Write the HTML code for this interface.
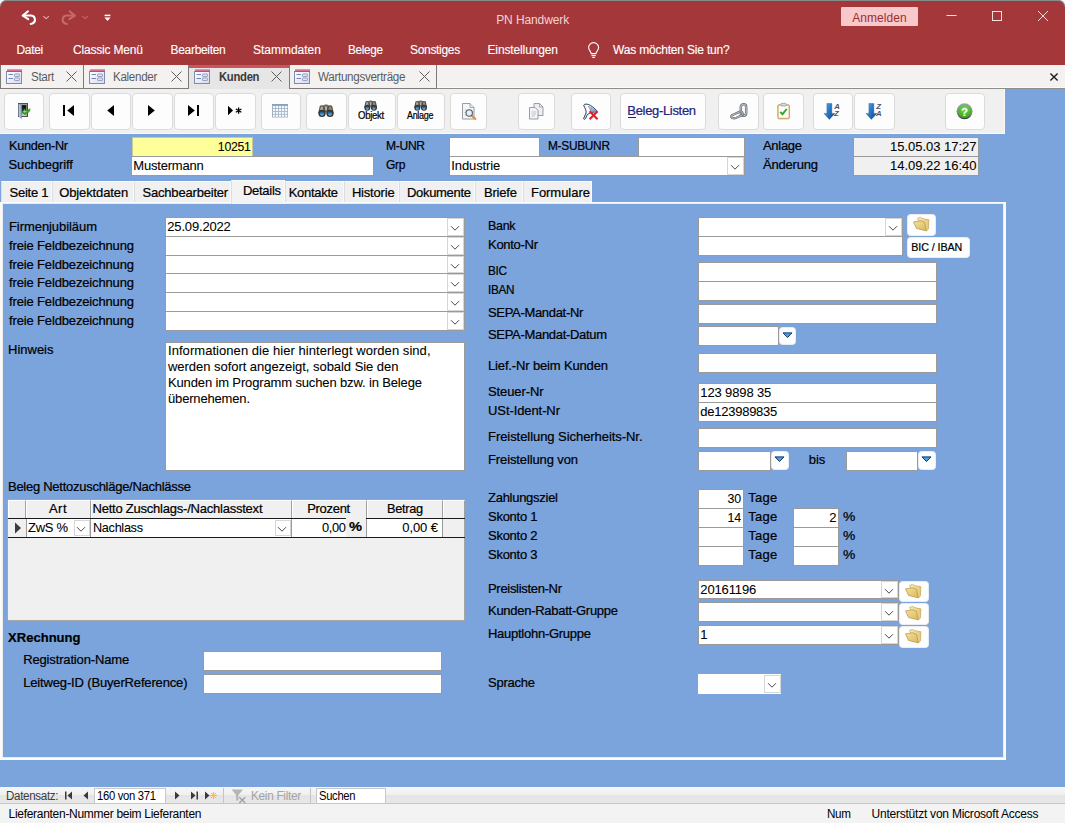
<!DOCTYPE html>
<html lang="de">
<head>
<meta charset="utf-8">
<title>PN Handwerk</title>
<style>
*{box-sizing:border-box;margin:0;padding:0}
html,body{width:1065px;height:823px;overflow:hidden;background:#7ba3dc}
body{position:relative;font-family:"Liberation Sans",sans-serif;font-size:13px;color:#000}
.a{position:absolute;white-space:nowrap;-webkit-text-stroke:0.22px}
svg{position:absolute;overflow:visible}
.b{background:#fdfdfd;border:1px solid #dddbda;border-radius:4px}
.f{background:#fff;border:1px solid #9a9a9a}
.dd{background:#fff;border:1px solid #d6d6d6}
.sb{background:#fefefe;border:1px solid #e9edf3;border-radius:3.500px}
.ft{background:#f0f0f0;border:1px solid #fafafa;border-left-color:#dedede;border-bottom:none}
.hd{background:#f0f0f0;border-right:1px solid #a0a0a0;border-bottom:1px solid #a0a0a0;border-top:1px solid #fff;border-left:1px solid #fff}
</style>
</head>
<body>
<div class="a " style="left:0px;top:0px;width:1065px;height:65px;background:#a4373a"></div>
<div class="a " style="left:0px;top:0px;width:1065px;height:1px;background:#838b8b"></div>
<svg class="a" style="left:0;top:0" width="7" height="7" viewBox="0 0 7 7"><path d="M0 0h6.500A6.500 6.500 0 0 0 0 6.500z" fill="#f4f4f4"/><path d="M6.500 .5A6 6 0 0 0 .5 6.500" fill="none" stroke="#858b8b" stroke-width="1"/></svg>
<svg class="a" style="left:1058px;top:0" width="7" height="7" viewBox="0 0 7 7"><path d="M7 0H.5A6.500 6.500 0 0 1 7 6.500z" fill="#f4f4f4"/><path d="M.5 .5A6 6 0 0 1 6.500 6.500" fill="none" stroke="#858b8b" stroke-width="1"/></svg>
<div class="a" style="top:12px;line-height:16px;font-size:12px;letter-spacing:-0.105px;left:496.20px;-webkit-text-stroke:0;color:#f3d4d5;">PN Handwerk</div>
<div class="a " style="left:841px;top:7px;width:77px;height:19px;background:#f9c8cb;border-radius:1px"></div>
<div class="a" style="top:10px;line-height:16px;font-size:12px;letter-spacing:0.066px;left:852.20px;-webkit-text-stroke:0;color:#9c2f33;">Anmelden</div>
<svg class="a" style="left:940px;top:5px" width="120" height="24" viewBox="940 5 120 24" fill="none" stroke="#f6dfe0" stroke-width="1"><path d="M946.5 15.5h10"/><rect x="992.5" y="11.5" width="9" height="9"/><path d="M1038 11l10 10M1048 11l-10 10"/></svg>
<svg class="a" style="left:18px;top:6px" width="100" height="22" viewBox="18 6 100 22" fill="none" stroke-linecap="round" stroke-linejoin="round"><path d="M28 11.300L22.700 15.600l5.500 3.500" stroke="#fff" stroke-width="2"/><path d="M23.500 15.600h7.400a4.100 4.100 0 0 1 1.500 7.900l-1.800.4" stroke="#fff" stroke-width="2"/><path d="M43.600 16.300l2.500 2.300 2.500-2.300" stroke="#eaa9ac" stroke-width="1.100"/><path d="M69.600 11.300l5.300 4.300-5.500 3.500" stroke="#c4696d" stroke-width="2"/><path d="M74.100 15.600h-7.400a4.100 4.100 0 0 0-1.500 7.900l1.800.4" stroke="#c4696d" stroke-width="2"/><path d="M82.600 16.300l2.500 2.300 2.500-2.300" stroke="#c4696d" stroke-width="1.100"/><path d="M104.600 15.400h5.800" stroke="#fff" stroke-width="1.500" stroke-linecap="butt"/><path d="M104.400 17.600h6.200l-3.100 3.500z" fill="#fff" stroke="none"/></svg>
<div class="a" style="top:42px;line-height:16px;font-size:12px;letter-spacing:-0.320px;left:16.50px;-webkit-text-stroke:0;color:#fff;-webkit-text-stroke:0.12px #fff;">Datei</div>
<div class="a" style="top:42px;line-height:16px;font-size:12px;letter-spacing:-0.184px;left:73.00px;-webkit-text-stroke:0;color:#fff;-webkit-text-stroke:0.12px #fff;">Classic Menü</div>
<div class="a" style="top:42px;line-height:16px;font-size:12px;letter-spacing:-0.305px;left:170.50px;-webkit-text-stroke:0;color:#fff;-webkit-text-stroke:0.12px #fff;">Bearbeiten</div>
<div class="a" style="top:42px;line-height:16px;font-size:12px;letter-spacing:-0.025px;left:253.00px;-webkit-text-stroke:0;color:#fff;-webkit-text-stroke:0.12px #fff;">Stammdaten</div>
<div class="a" style="top:42px;line-height:16px;font-size:12px;letter-spacing:-0.320px;transform:scaleX(0.9785);transform-origin:left center;left:348.30px;-webkit-text-stroke:0;color:#fff;-webkit-text-stroke:0.12px #fff;">Belege</div>
<div class="a" style="top:42px;line-height:16px;font-size:12px;letter-spacing:-0.320px;left:410.00px;-webkit-text-stroke:0;color:#fff;-webkit-text-stroke:0.12px #fff;">Sonstiges</div>
<div class="a" style="top:42px;line-height:16px;font-size:12px;letter-spacing:-0.129px;left:487.50px;-webkit-text-stroke:0;color:#fff;-webkit-text-stroke:0.12px #fff;">Einstellungen</div>
<div class="a" style="top:42px;line-height:16px;font-size:12px;letter-spacing:-0.188px;left:613.00px;-webkit-text-stroke:0;color:#fff;-webkit-text-stroke:0.15px #fff;">Was möchten Sie tun?</div>
<svg class="a" style="left:586px;top:41px" width="16" height="18" viewBox="586 41 16 18" fill="none" stroke="#fff" stroke-width="1.1"><path d="M591.2 53.6c0-2.2-2.6-3-2.6-6a5 5 0 0 1 10 0c0 3-2.6 3.800-2.600 6z"/><path d="M591.5 55.600h4.200M592.300 57.500h2.600"/></svg>
<div class="a " style="left:0px;top:65px;width:1065px;height:24px;background:#f3f2f1;border-bottom:1px solid #8f8e8d;box-shadow:inset 0 -1px 0 #fbfbfa"></div>
<div class="a " style="left:0px;top:65px;width:84px;height:24px;background:#f3f2f1;border-right:1px solid #7d7c7b;border-bottom:1px solid #7d7c7b;border-left:1px solid #7d7c7b"></div>
<div class="a " style="left:84px;top:65px;width:105px;height:24px;background:#f3f2f1;border-right:1px solid #7d7c7b;border-bottom:1px solid #7d7c7b"></div>
<div class="a " style="left:189px;top:65px;width:100px;height:24px;background:#e7e6e6;border-top:3px solid #c9565a"></div>
<div class="a " style="left:289px;top:65px;width:148px;height:24px;background:#f3f2f1;border-right:1px solid #7d7c7b;border-bottom:1px solid #7d7c7b;border-left:1px solid #7d7c7b"></div>
<svg width="16" height="15" viewBox="0 0 16 15" style="left:6px;top:69px"><defs><linearGradient id="tig" x1="0" y1="0" x2="1" y2="1"><stop offset="0" stop-color="#ffffff"/><stop offset="1" stop-color="#d5dbf0"/></linearGradient><linearGradient id="tit" x1="0" y1="0" x2="0" y2="1"><stop offset="0" stop-color="#e9a9bf"/><stop offset="1" stop-color="#bf3a62"/></linearGradient></defs><rect x="0.500" y="2.500" width="15" height="12" fill="url(#tig)" stroke="#7d8bae"/><rect x="1" y="0" width="15" height="3" fill="url(#tit)"/><path d="M2.500 5.500h4.500M2.500 9.500h4.500" stroke="#7587b3" stroke-width="1"/><rect x="8.500" y="5" width="5" height="2.500" rx=".6" fill="#dfe4f1" stroke="#8d99bb" stroke-width=".9"/><rect x="8.500" y="9" width="5" height="2.500" rx=".6" fill="#dfe4f1" stroke="#8d99bb" stroke-width=".9"/></svg>
<svg width="16" height="15" viewBox="0 0 16 15" style="left:89px;top:69px"><defs><linearGradient id="tig" x1="0" y1="0" x2="1" y2="1"><stop offset="0" stop-color="#ffffff"/><stop offset="1" stop-color="#d5dbf0"/></linearGradient><linearGradient id="tit" x1="0" y1="0" x2="0" y2="1"><stop offset="0" stop-color="#e9a9bf"/><stop offset="1" stop-color="#bf3a62"/></linearGradient></defs><rect x="0.500" y="2.500" width="15" height="12" fill="url(#tig)" stroke="#7d8bae"/><rect x="1" y="0" width="15" height="3" fill="url(#tit)"/><path d="M2.500 5.500h4.500M2.500 9.500h4.500" stroke="#7587b3" stroke-width="1"/><rect x="8.500" y="5" width="5" height="2.500" rx=".6" fill="#dfe4f1" stroke="#8d99bb" stroke-width=".9"/><rect x="8.500" y="9" width="5" height="2.500" rx=".6" fill="#dfe4f1" stroke="#8d99bb" stroke-width=".9"/></svg>
<svg width="16" height="15" viewBox="0 0 16 15" style="left:194px;top:69px"><defs><linearGradient id="tig" x1="0" y1="0" x2="1" y2="1"><stop offset="0" stop-color="#ffffff"/><stop offset="1" stop-color="#d5dbf0"/></linearGradient><linearGradient id="tit" x1="0" y1="0" x2="0" y2="1"><stop offset="0" stop-color="#e9a9bf"/><stop offset="1" stop-color="#bf3a62"/></linearGradient></defs><rect x="0.500" y="2.500" width="15" height="12" fill="url(#tig)" stroke="#7d8bae"/><rect x="1" y="0" width="15" height="3" fill="url(#tit)"/><path d="M2.500 5.500h4.500M2.500 9.500h4.500" stroke="#7587b3" stroke-width="1"/><rect x="8.500" y="5" width="5" height="2.500" rx=".6" fill="#dfe4f1" stroke="#8d99bb" stroke-width=".9"/><rect x="8.500" y="9" width="5" height="2.500" rx=".6" fill="#dfe4f1" stroke="#8d99bb" stroke-width=".9"/></svg>
<svg width="16" height="15" viewBox="0 0 16 15" style="left:294px;top:69px"><defs><linearGradient id="tig" x1="0" y1="0" x2="1" y2="1"><stop offset="0" stop-color="#ffffff"/><stop offset="1" stop-color="#d5dbf0"/></linearGradient><linearGradient id="tit" x1="0" y1="0" x2="0" y2="1"><stop offset="0" stop-color="#e9a9bf"/><stop offset="1" stop-color="#bf3a62"/></linearGradient></defs><rect x="0.500" y="2.500" width="15" height="12" fill="url(#tig)" stroke="#7d8bae"/><rect x="1" y="0" width="15" height="3" fill="url(#tit)"/><path d="M2.500 5.500h4.500M2.500 9.500h4.500" stroke="#7587b3" stroke-width="1"/><rect x="8.500" y="5" width="5" height="2.500" rx=".6" fill="#dfe4f1" stroke="#8d99bb" stroke-width=".9"/><rect x="8.500" y="9" width="5" height="2.500" rx=".6" fill="#dfe4f1" stroke="#8d99bb" stroke-width=".9"/></svg>
<div class="a" style="top:69px;line-height:16px;font-size:12px;letter-spacing:-0.320px;transform:scaleX(0.9683);transform-origin:left center;left:30.60px;-webkit-text-stroke:0;color:#5c5b5a;">Start</div>
<div class="a" style="top:69px;line-height:16px;font-size:12px;letter-spacing:-0.320px;transform:scaleX(0.9673);transform-origin:left center;left:113.40px;-webkit-text-stroke:0;color:#5c5b5a;">Kalender</div>
<div class="a" style="top:69px;line-height:16px;font-size:12px;letter-spacing:-0.320px;transform:scaleX(0.9405);transform-origin:left center;left:218.50px;font-weight:bold;-webkit-text-stroke:0;color:#3b3a39;">Kunden</div>
<div class="a" style="top:69px;line-height:16px;font-size:12px;letter-spacing:-0.320px;transform:scaleX(0.9708);transform-origin:left center;left:318.30px;-webkit-text-stroke:0;color:#5c5b5a;">Wartungsverträge</div>
<svg width="11" height="11" viewBox="0 0 11 11" style="left:66px;top:71px" fill="none" stroke="#5e5d5c" stroke-width="1"><path d="M0.500 0.500l10 10M10.500 0.500l-10 10"/></svg>
<svg width="11" height="11" viewBox="0 0 11 11" style="left:171px;top:71px" fill="none" stroke="#5e5d5c" stroke-width="1"><path d="M0.500 0.500l10 10M10.500 0.500l-10 10"/></svg>
<svg width="11" height="11" viewBox="0 0 11 11" style="left:271px;top:71px" fill="none" stroke="#5e5d5c" stroke-width="1"><path d="M0.500 0.500l10 10M10.500 0.500l-10 10"/></svg>
<svg width="11" height="11" viewBox="0 0 11 11" style="left:419px;top:71px" fill="none" stroke="#5e5d5c" stroke-width="1"><path d="M0.500 0.500l10 10M10.500 0.500l-10 10"/></svg>
<svg class="a" style="left:1049px;top:72px" width="10" height="10" viewBox="0 0 10 10" fill="none" stroke="#1e1e1e" stroke-width="1.400"><path d="M1.400 1.400l7.200 7.200M8.600 1.400l-7.200 7.200"/></svg>
<div class="a " style="left:0px;top:89px;width:1005px;height:45px;background:#f0f0f0;border-right:1px solid #fafafa;border-bottom:1px solid #fafafa"></div>
<div class="a b" style="left:4.0px;top:93px;width:40.0px;height:37px;"></div>
<div class="a b" style="left:49.0px;top:93px;width:40.5px;height:37px;"></div>
<div class="a b" style="left:91.0px;top:93px;width:39.5px;height:37px;"></div>
<div class="a b" style="left:132.0px;top:93px;width:40.5px;height:37px;"></div>
<div class="a b" style="left:174.0px;top:93px;width:39.5px;height:37px;"></div>
<div class="a b" style="left:215.0px;top:93px;width:40.5px;height:37px;"></div>
<div class="a b" style="left:261.0px;top:93px;width:40.0px;height:37px;"></div>
<div class="a b" style="left:306.0px;top:93px;width:41.0px;height:37px;"></div>
<div class="a b" style="left:347.5px;top:93px;width:48.5px;height:37px;"></div>
<div class="a b" style="left:396.5px;top:93px;width:48.5px;height:37px;"></div>
<div class="a b" style="left:450.0px;top:93px;width:37.0px;height:37px;"></div>
<div class="a b" style="left:518.0px;top:93px;width:37.0px;height:37px;"></div>
<div class="a b" style="left:571.0px;top:93px;width:40.0px;height:37px;"></div>
<div class="a b" style="left:620.0px;top:93px;width:86.0px;height:37px;"></div>
<div class="a b" style="left:718.0px;top:93px;width:41.0px;height:37px;"></div>
<div class="a b" style="left:763.0px;top:93px;width:41.0px;height:37px;"></div>
<div class="a b" style="left:813.0px;top:93px;width:40.0px;height:37px;"></div>
<div class="a b" style="left:854.0px;top:93px;width:41.0px;height:37px;"></div>
<div class="a b" style="left:945.0px;top:93px;width:40.0px;height:37px;"></div>
<div class="a" style="top:138px;line-height:16px;font-size:13px;letter-spacing:-0.320px;transform:scaleX(0.9783);transform-origin:left center;left:8.50px;">Kunden-Nr</div>
<div class="a" style="top:157px;line-height:16px;font-size:13px;letter-spacing:-0.106px;left:8.50px;">Suchbegriff</div>
<div class="a f" style="left:132px;top:137px;width:121px;height:20px;background:#ffff99;border-color:#c9c9a0;"></div>
<div class="a" style="top:139px;line-height:16px;font-size:13px;letter-spacing:-0.320px;transform:scaleX(0.9463);transform-origin:right center;right:814.82px;-webkit-text-stroke:0.080px;">10251</div>
<div class="a f" style="left:131px;top:156px;width:243px;height:20px;background:#fff;"></div>
<div class="a" style="top:158px;line-height:16px;font-size:13px;letter-spacing:-0.195px;left:133.30px;-webkit-text-stroke:0.080px;">Mustermann</div>
<div class="a" style="top:138px;line-height:16px;font-size:13px;letter-spacing:-0.320px;transform:scaleX(0.9275);transform-origin:left center;left:386.00px;">M-UNR</div>
<div class="a" style="top:157px;line-height:16px;font-size:13px;letter-spacing:-0.320px;transform:scaleX(0.9272);transform-origin:left center;left:386.00px;">Grp</div>
<div class="a f" style="left:449px;top:137px;width:91px;height:20px;background:#fff;"></div>
<div class="a" style="top:138px;line-height:16px;font-size:13px;letter-spacing:-0.320px;transform:scaleX(0.9142);transform-origin:left center;left:548.00px;">M-SUBUNR</div>
<div class="a f" style="left:638px;top:137px;width:107px;height:20px;background:#fff;"></div>
<div class="a f" style="left:449px;top:156px;width:296px;height:20px;background:#fff;"></div>
<div class="a" style="top:158px;line-height:16px;font-size:13px;letter-spacing:-0.107px;left:451.30px;-webkit-text-stroke:0.080px;">Industrie</div>
<div class="a dd" style="left:727px;top:157px;width:17px;height:18px;"></div>
<svg class="a" style="left:730.0px;top:164.0px" width="10" height="7" viewBox="0 0 10 7" fill="none" stroke="#4a4a4a" stroke-width="1"><path d="M1 1.200l4 4 4-4"/></svg>
<div class="a" style="top:138px;line-height:16px;font-size:13px;letter-spacing:-0.296px;left:763.00px;">Anlage</div>
<div class="a" style="top:157px;line-height:16px;font-size:13px;letter-spacing:-0.197px;left:763.00px;">Änderung</div>
<div class="a f" style="left:853px;top:137px;width:126px;height:20px;background:#f0f0f0;"></div>
<div class="a" style="top:139px;line-height:16px;font-size:13px;letter-spacing:-0.019px;right:88.52px;-webkit-text-stroke:0.080px;">15.05.03 17:27</div>
<div class="a f" style="left:853px;top:156px;width:126px;height:20px;background:#f0f0f0;"></div>
<div class="a" style="top:158px;line-height:16px;font-size:13px;letter-spacing:-0.019px;right:88.52px;-webkit-text-stroke:0.080px;">14.09.22 16:40</div>
<div class="a " style="left:0px;top:202px;width:1006px;height:558px;background:#fbfbfa"></div>
<div class="a " style="left:3px;top:204px;width:1000px;height:553px;background:#7ba3dc;box-shadow:0 0 0 1px #ececec"></div>
<div class="a ft" style="left:1px;top:181px;width:51px;height:21px;"></div>
<div class="a ft" style="left:52px;top:181px;width:82px;height:21px;"></div>
<div class="a ft" style="left:134px;top:181px;width:97px;height:21px;"></div>
<div class="a ft" style="left:285px;top:181px;width:59px;height:21px;"></div>
<div class="a ft" style="left:344px;top:181px;width:55px;height:21px;"></div>
<div class="a ft" style="left:399px;top:181px;width:76px;height:21px;"></div>
<div class="a ft" style="left:475px;top:181px;width:48px;height:21px;"></div>
<div class="a ft" style="left:523px;top:181px;width:69px;height:21px;"></div>
<div class="a ft" style="left:231px;top:180px;width:54px;height:24px;background:#f3f3f3"></div>
<div class="a" style="top:185px;line-height:16px;font-size:13px;letter-spacing:-0.262px;left:9.60px;">Seite 1</div>
<div class="a" style="top:185px;line-height:16px;font-size:13px;letter-spacing:-0.111px;left:59.20px;">Objektdaten</div>
<div class="a" style="top:185px;line-height:16px;font-size:13px;letter-spacing:-0.190px;left:142.50px;">Sachbearbeiter</div>
<div class="a" style="top:185px;line-height:16px;font-size:13px;letter-spacing:-0.287px;left:288.70px;">Kontakte</div>
<div class="a" style="top:185px;line-height:16px;font-size:13px;letter-spacing:-0.181px;left:351.90px;">Historie</div>
<div class="a" style="top:185px;line-height:16px;font-size:13px;letter-spacing:-0.320px;left:407.00px;">Dokumente</div>
<div class="a" style="top:185px;line-height:16px;font-size:13px;letter-spacing:-0.171px;left:483.90px;">Briefe</div>
<div class="a" style="top:185px;line-height:16px;font-size:13px;letter-spacing:-0.043px;left:531.00px;">Formulare</div>
<div class="a" style="top:183px;line-height:16px;font-size:13px;letter-spacing:-0.290px;left:243.00px;">Details</div>
<div class="a f" style="left:165px;top:217px;width:300px;height:20px;background:#fff;"></div>
<div class="a" style="top:219px;line-height:16px;font-size:13px;letter-spacing:-0.174px;left:167.30px;-webkit-text-stroke:0.080px;">25.09.2022</div>
<div class="a dd" style="left:447px;top:218px;width:17px;height:18px;"></div>
<svg class="a" style="left:450.0px;top:225.0px" width="10" height="7" viewBox="0 0 10 7" fill="none" stroke="#4a4a4a" stroke-width="1"><path d="M1 1.200l4 4 4-4"/></svg>
<div class="a" style="top:219px;line-height:16px;font-size:13px;letter-spacing:-0.067px;left:9.00px;">Firmenjubiläum</div>
<div class="a f" style="left:165px;top:236px;width:300px;height:20px;background:#fff;"></div>
<div class="a dd" style="left:447px;top:237px;width:17px;height:18px;"></div>
<svg class="a" style="left:450.0px;top:244.0px" width="10" height="7" viewBox="0 0 10 7" fill="none" stroke="#4a4a4a" stroke-width="1"><path d="M1 1.200l4 4 4-4"/></svg>
<div class="a" style="top:238px;line-height:16px;font-size:13px;letter-spacing:-0.146px;left:9.00px;">freie Feldbezeichnung</div>
<div class="a f" style="left:165px;top:255px;width:300px;height:19px;background:#fff;"></div>
<div class="a dd" style="left:447px;top:256px;width:17px;height:17px;"></div>
<svg class="a" style="left:450.0px;top:262.5px" width="10" height="7" viewBox="0 0 10 7" fill="none" stroke="#4a4a4a" stroke-width="1"><path d="M1 1.200l4 4 4-4"/></svg>
<div class="a" style="top:257px;line-height:16px;font-size:13px;letter-spacing:-0.146px;left:9.00px;">freie Feldbezeichnung</div>
<div class="a f" style="left:165px;top:273px;width:300px;height:20px;background:#fff;"></div>
<div class="a dd" style="left:447px;top:274px;width:17px;height:18px;"></div>
<svg class="a" style="left:450.0px;top:281.0px" width="10" height="7" viewBox="0 0 10 7" fill="none" stroke="#4a4a4a" stroke-width="1"><path d="M1 1.200l4 4 4-4"/></svg>
<div class="a" style="top:275px;line-height:16px;font-size:13px;letter-spacing:-0.146px;left:9.00px;">freie Feldbezeichnung</div>
<div class="a f" style="left:165px;top:292px;width:300px;height:20px;background:#fff;"></div>
<div class="a dd" style="left:447px;top:293px;width:17px;height:18px;"></div>
<svg class="a" style="left:450.0px;top:300.0px" width="10" height="7" viewBox="0 0 10 7" fill="none" stroke="#4a4a4a" stroke-width="1"><path d="M1 1.200l4 4 4-4"/></svg>
<div class="a" style="top:294px;line-height:16px;font-size:13px;letter-spacing:-0.146px;left:9.00px;">freie Feldbezeichnung</div>
<div class="a f" style="left:165px;top:311px;width:300px;height:20px;background:#fff;"></div>
<div class="a dd" style="left:447px;top:312px;width:17px;height:18px;"></div>
<svg class="a" style="left:450.0px;top:319.0px" width="10" height="7" viewBox="0 0 10 7" fill="none" stroke="#4a4a4a" stroke-width="1"><path d="M1 1.200l4 4 4-4"/></svg>
<div class="a" style="top:313px;line-height:16px;font-size:13px;letter-spacing:-0.146px;left:9.00px;">freie Feldbezeichnung</div>
<div class="a" style="top:342px;line-height:16px;font-size:13px;letter-spacing:-0.002px;left:8.00px;">Hinweis</div>
<div class="a f" style="left:165px;top:342px;width:300px;height:129px;"></div>
<div class="a" style="top:343px;line-height:16px;font-size:13px;letter-spacing:0.052px;left:168.00px;-webkit-text-stroke:0.080px;">Informationen die hier hinterlegt worden sind,</div>
<div class="a" style="top:359px;line-height:16px;font-size:13px;letter-spacing:-0.040px;left:168.03px;-webkit-text-stroke:0.080px;">werden sofort angezeigt, sobald Sie den</div>
<div class="a" style="top:375px;line-height:16px;font-size:13px;letter-spacing:-0.139px;left:168.00px;-webkit-text-stroke:0.080px;">Kunden im Programm suchen bzw. in Belege</div>
<div class="a" style="top:391px;line-height:16px;font-size:13px;letter-spacing:-0.167px;left:168.00px;-webkit-text-stroke:0.080px;">übernehemen.</div>
<div class="a" style="top:479px;line-height:16px;font-size:13px;letter-spacing:-0.268px;left:8.00px;">Beleg Nettozuschläge/Nachlässe</div>
<div class="a " style="left:7px;top:499px;width:458px;height:122px;background:#f0f0f0;border:1px solid #a6a6a6"></div>
<div class="a hd" style="left:8px;top:499.5px;width:18px;height:19.0px;"></div>
<div class="a hd" style="left:26px;top:499.5px;width:64.5px;height:19.0px;"></div>
<div class="a hd" style="left:90.5px;top:499.5px;width:201.0px;height:19.0px;"></div>
<div class="a hd" style="left:291.5px;top:499.5px;width:75.0px;height:19.0px;"></div>
<div class="a hd" style="left:366.5px;top:499.5px;width:76.0px;height:19.0px;"></div>
<div class="a hd" style="left:442.5px;top:499.5px;width:22.0px;height:19.0px;"></div>
<div class="a" style="top:501px;line-height:16px;font-size:13px;letter-spacing:0.443px;left:49.00px;">Art</div>
<div class="a" style="top:501px;line-height:16px;font-size:13px;letter-spacing:-0.225px;left:92.50px;">Netto Zuschlags-/Nachlasstext</div>
<div class="a" style="top:501px;line-height:16px;font-size:13px;letter-spacing:-0.300px;left:307.20px;">Prozent</div>
<div class="a" style="top:501px;line-height:16px;font-size:13px;letter-spacing:-0.320px;transform:scaleX(0.9810);transform-origin:left center;left:386.50px;">Betrag</div>
<div class="a " style="left:26px;top:519px;width:416.5px;height:18px;background:#fff"></div>
<div class="a " style="left:8px;top:518.2px;width:456.5px;height:1.0px;background:#1a1a1a"></div>
<div class="a " style="left:8px;top:536.8px;width:456.5px;height:1.0px;background:#1a1a1a"></div>
<div class="a " style="left:25.5px;top:519px;width:1.0px;height:18px;background:#9a9a9a"></div>
<div class="a " style="left:90.0px;top:519px;width:1.0px;height:18px;background:#9a9a9a"></div>
<div class="a " style="left:291.0px;top:519px;width:1.0px;height:18px;background:#9a9a9a"></div>
<div class="a " style="left:366.0px;top:519px;width:1.0px;height:18px;background:#9a9a9a"></div>
<div class="a " style="left:442.0px;top:519px;width:1.0px;height:18px;background:#9a9a9a"></div>
<div class="a " style="left:346px;top:518px;width:20px;height:18.799999999999955px;background:#f0f0f0"></div>
<svg class="a" style="left:14px;top:522px" width="8" height="12" viewBox="0 0 8 12"><path d="M1 0.500l6 5.500-6 5.500z" fill="#3c3c3c"/></svg>
<div class="a" style="top:520px;line-height:16px;font-size:13px;letter-spacing:-0.293px;left:28.00px;-webkit-text-stroke:0.080px;">ZwS %</div>
<div class="a dd" style="left:73.5px;top:520px;width:16.0px;height:16px;"></div>
<svg class="a" style="left:76.0px;top:526.0px" width="10" height="7" viewBox="0 0 10 7" fill="none" stroke="#4a4a4a" stroke-width="1"><path d="M1 1.200l4 4 4-4"/></svg>
<div class="a" style="top:520px;line-height:16px;font-size:13px;letter-spacing:-0.320px;transform:scaleX(0.9760);transform-origin:left center;left:92.50px;-webkit-text-stroke:0.080px;">Nachlass</div>
<div class="a dd" style="left:274.5px;top:520px;width:16.0px;height:16px;"></div>
<svg class="a" style="left:277.0px;top:526.0px" width="10" height="7" viewBox="0 0 10 7" fill="none" stroke="#4a4a4a" stroke-width="1"><path d="M1 1.200l4 4 4-4"/></svg>
<div class="a" style="top:520px;line-height:16px;font-size:13px;letter-spacing:-0.320px;transform:scaleX(0.9861);transform-origin:left center;left:321.60px;-webkit-text-stroke:0.080px;">0,00</div>
<div class="a" style="top:519px;line-height:16px;font-size:13px;transform:scaleX(1.1249);transform-origin:left center;left:348.60px;font-weight:bold;">%</div>
<div class="a" style="top:520px;line-height:16px;font-size:13px;letter-spacing:-0.108px;left:402.30px;-webkit-text-stroke:0.080px;">0,00 €</div>
<div class="a" style="top:630px;line-height:16px;font-size:13px;letter-spacing:0.034px;left:8.00px;font-weight:bold;">XRechnung</div>
<div class="a" style="top:652px;line-height:16px;font-size:13px;letter-spacing:-0.148px;left:23.20px;">Registration-Name</div>
<div class="a" style="top:675px;line-height:16px;font-size:13px;letter-spacing:-0.156px;left:23.20px;">Leitweg-ID (BuyerReference)</div>
<div class="a f" style="left:203px;top:651px;width:239px;height:20px;background:#fff;"></div>
<div class="a f" style="left:203px;top:674px;width:239px;height:20px;background:#fff;"></div>
<svg width="0" height="0" style="position:absolute"><defs><linearGradient id="fg" x1="0" y1="0" x2="1" y2="1"><stop offset="0" stop-color="#f4e19c"/><stop offset="1" stop-color="#d9b85e"/></linearGradient><linearGradient id="fb" x1="0" y1="0" x2="1" y2="0"><stop offset="0" stop-color="#f8edc0"/><stop offset="1" stop-color="#e3c774"/></linearGradient></defs></svg>
<div class="a" style="top:218px;line-height:16px;font-size:13px;letter-spacing:-0.320px;transform:scaleX(0.9584);transform-origin:left center;left:488.00px;">Bank</div>
<div class="a" style="top:237px;line-height:16px;font-size:13px;letter-spacing:-0.289px;left:488.00px;">Konto-Nr</div>
<div class="a" style="top:263px;line-height:16px;font-size:13px;letter-spacing:-0.320px;transform:scaleX(0.9034);transform-origin:left center;left:488.00px;">BIC</div>
<div class="a" style="top:282px;line-height:16px;font-size:13px;letter-spacing:-0.320px;transform:scaleX(0.9019);transform-origin:left center;left:488.00px;">IBAN</div>
<div class="a" style="top:305px;line-height:16px;font-size:13px;letter-spacing:-0.320px;left:488.00px;">SEPA-Mandat-Nr</div>
<div class="a" style="top:327px;line-height:16px;font-size:13px;letter-spacing:-0.315px;left:488.00px;">SEPA-Mandat-Datum</div>
<div class="a" style="top:358px;line-height:16px;font-size:13px;letter-spacing:-0.149px;left:488.00px;">Lief.-Nr beim Kunden</div>
<div class="a" style="top:384px;line-height:16px;font-size:13px;letter-spacing:-0.107px;left:488.00px;">Steuer-Nr</div>
<div class="a" style="top:403px;line-height:16px;font-size:13px;letter-spacing:-0.087px;left:488.00px;">USt-Ident-Nr</div>
<div class="a" style="top:429px;line-height:16px;font-size:13px;letter-spacing:-0.057px;left:488.00px;">Freistellung Sicherheits-Nr.</div>
<div class="a" style="top:452px;line-height:16px;font-size:13px;letter-spacing:-0.118px;left:488.00px;">Freistellung von</div>
<div class="a" style="top:490px;line-height:16px;font-size:13px;letter-spacing:-0.271px;left:488.00px;">Zahlungsziel</div>
<div class="a" style="top:509px;line-height:16px;font-size:13px;letter-spacing:-0.259px;left:488.00px;">Skonto 1</div>
<div class="a" style="top:528px;line-height:16px;font-size:13px;letter-spacing:-0.259px;left:488.00px;">Skonto 2</div>
<div class="a" style="top:547px;line-height:16px;font-size:13px;letter-spacing:-0.259px;left:488.00px;">Skonto 3</div>
<div class="a" style="top:581px;line-height:16px;font-size:13px;letter-spacing:-0.309px;left:488.00px;">Preislisten-Nr</div>
<div class="a" style="top:603px;line-height:16px;font-size:13px;letter-spacing:-0.271px;left:488.00px;">Kunden-Rabatt-Gruppe</div>
<div class="a" style="top:626px;line-height:16px;font-size:13px;letter-spacing:-0.264px;left:488.00px;">Hauptlohn-Gruppe</div>
<div class="a" style="top:675px;line-height:16px;font-size:13px;letter-spacing:-0.237px;left:488.00px;">Sprache</div>
<div class="a f" style="left:698px;top:217px;width:205px;height:20px;background:#fff;"></div>
<div class="a dd" style="left:885px;top:218px;width:17px;height:18px;"></div>
<svg class="a" style="left:888.0px;top:225.0px" width="10" height="7" viewBox="0 0 10 7" fill="none" stroke="#4a4a4a" stroke-width="1"><path d="M1 1.200l4 4 4-4"/></svg>
<div class="a sb" style="left:907px;top:214px;width:29px;height:22px;"></div>
<svg class="a" style="left:912.6px;top:217.4px" width="16.500" height="14.500" viewBox="0 0 16.500 14.500"><path d="M4.600 1.400L7.400 0.400l2.600 1.300 5.900 1.100-.5 9.300-2.200 1.800-6-6z" fill="url(#fb)" stroke="#c4a552" stroke-width=".7" stroke-linejoin="round"/><path d="M0.500 4.900l7.500-1.100 3.500 1.500 1.800 8.500-9.700-2.300z" fill="url(#fg)" stroke="#b4923f" stroke-width=".7" stroke-linejoin="round"/></svg>
<div class="a f" style="left:698px;top:236px;width:205px;height:20px;background:#fff;"></div>
<div class="a sb" style="left:907px;top:237px;width:63px;height:21px;"></div>
<div class="a" style="top:239px;line-height:16px;font-size:10.7px;letter-spacing:-0.080px;left:911.30px;">BIC / IBAN</div>
<div class="a f" style="left:698px;top:262px;width:239px;height:20px;background:#fff;"></div>
<div class="a f" style="left:698px;top:281px;width:239px;height:20px;background:#fff;"></div>
<div class="a f" style="left:698px;top:304px;width:239px;height:20px;background:#fff;"></div>
<div class="a f" style="left:698px;top:326px;width:81px;height:20px;background:#fff;"></div>
<div class="a sb" style="left:779px;top:327px;width:17px;height:18px;"></div>
<svg class="a" style="left:781.6px;top:332px" width="11" height="7" viewBox="0 0 11 7"><path d="M1 .900h9l-4.500 4.600z" fill="#4aa2ec" stroke="#0f3468" stroke-width="1" stroke-linejoin="round"/></svg>
<div class="a f" style="left:698px;top:353px;width:239px;height:20px;background:#fff;"></div>
<div class="a f" style="left:698px;top:383px;width:239px;height:20px;background:#fff;"></div>
<div class="a" style="top:385px;line-height:16px;font-size:13px;letter-spacing:-0.129px;left:700.30px;-webkit-text-stroke:0.080px;">123 9898 35</div>
<div class="a f" style="left:698px;top:402px;width:239px;height:20px;background:#fff;"></div>
<div class="a" style="top:404px;line-height:16px;font-size:13px;letter-spacing:-0.253px;left:700.30px;-webkit-text-stroke:0.080px;">de123989835</div>
<div class="a f" style="left:698px;top:428px;width:239px;height:20px;background:#fff;"></div>
<div class="a f" style="left:698px;top:451px;width:73px;height:20px;background:#fff;"></div>
<div class="a sb" style="left:771px;top:451px;width:18px;height:19px;"></div>
<svg class="a" style="left:774.1px;top:456px" width="11" height="7" viewBox="0 0 11 7"><path d="M1 .900h9l-4.500 4.600z" fill="#4aa2ec" stroke="#0f3468" stroke-width="1" stroke-linejoin="round"/></svg>
<div class="a" style="top:452px;line-height:16px;font-size:13px;letter-spacing:-0.057px;left:808.80px;">bis</div>
<div class="a f" style="left:846px;top:451px;width:72px;height:20px;background:#fff;"></div>
<div class="a sb" style="left:918px;top:451px;width:18px;height:19px;"></div>
<svg class="a" style="left:921.1px;top:456px" width="11" height="7" viewBox="0 0 11 7"><path d="M1 .900h9l-4.500 4.600z" fill="#4aa2ec" stroke="#0f3468" stroke-width="1" stroke-linejoin="round"/></svg>
<div class="a f" style="left:698px;top:489px;width:46px;height:20px;background:#fff;"></div>
<div class="a" style="top:491px;line-height:16px;font-size:13px;letter-spacing:-0.320px;transform:scaleX(0.9550);transform-origin:right center;right:323.82px;-webkit-text-stroke:0.080px;">30</div>
<div class="a f" style="left:698px;top:508px;width:46px;height:20px;background:#fff;"></div>
<div class="a" style="top:510px;line-height:16px;font-size:13px;letter-spacing:-0.320px;transform:scaleX(0.9550);transform-origin:right center;right:323.82px;-webkit-text-stroke:0.080px;">14</div>
<div class="a f" style="left:698px;top:527px;width:46px;height:20px;background:#fff;"></div>
<div class="a f" style="left:698px;top:546px;width:46px;height:20px;background:#fff;"></div>
<div class="a" style="top:490px;line-height:16px;font-size:13px;letter-spacing:0.272px;left:748.20px;">Tage</div>
<div class="a" style="top:509px;line-height:16px;font-size:13px;letter-spacing:0.272px;left:748.20px;">Tage</div>
<div class="a" style="top:509px;line-height:16px;font-size:13px;transform:scaleX(1.0643);transform-origin:left center;left:843.00px;">%</div>
<div class="a" style="top:528px;line-height:16px;font-size:13px;letter-spacing:0.272px;left:748.20px;">Tage</div>
<div class="a" style="top:528px;line-height:16px;font-size:13px;transform:scaleX(1.0643);transform-origin:left center;left:843.00px;">%</div>
<div class="a" style="top:547px;line-height:16px;font-size:13px;letter-spacing:0.272px;left:748.20px;">Tage</div>
<div class="a" style="top:547px;line-height:16px;font-size:13px;transform:scaleX(1.0643);transform-origin:left center;left:843.00px;">%</div>
<div class="a f" style="left:793px;top:508px;width:46px;height:20px;background:#fff;"></div>
<div class="a" style="top:510px;line-height:16px;font-size:13px;right:228.50px;-webkit-text-stroke:0.080px;">2</div>
<div class="a f" style="left:793px;top:527px;width:46px;height:20px;background:#fff;"></div>
<div class="a f" style="left:793px;top:546px;width:46px;height:20px;background:#fff;"></div>
<div class="a f" style="left:698px;top:580px;width:201px;height:19px;background:#fff;"></div>
<div class="a" style="top:582px;line-height:16px;font-size:13px;letter-spacing:-0.125px;left:700.30px;-webkit-text-stroke:0.080px;">20161196</div>
<div class="a dd" style="left:881px;top:581px;width:17px;height:17px;"></div>
<svg class="a" style="left:884.0px;top:587.5px" width="10" height="7" viewBox="0 0 10 7" fill="none" stroke="#4a4a4a" stroke-width="1"><path d="M1 1.200l4 4 4-4"/></svg>
<div class="a sb" style="left:899px;top:581px;width:30px;height:21px;"></div>
<svg class="a" style="left:905.1px;top:583.9px" width="16.500" height="14.500" viewBox="0 0 16.500 14.500"><path d="M4.600 1.400L7.400 0.400l2.600 1.300 5.900 1.100-.5 9.300-2.200 1.800-6-6z" fill="url(#fb)" stroke="#c4a552" stroke-width=".7" stroke-linejoin="round"/><path d="M0.500 4.900l7.500-1.100 3.500 1.500 1.800 8.500-9.700-2.300z" fill="url(#fg)" stroke="#b4923f" stroke-width=".7" stroke-linejoin="round"/></svg>
<div class="a f" style="left:698px;top:602px;width:201px;height:20px;background:#fff;"></div>
<div class="a dd" style="left:881px;top:603px;width:17px;height:18px;"></div>
<svg class="a" style="left:884.0px;top:610.0px" width="10" height="7" viewBox="0 0 10 7" fill="none" stroke="#4a4a4a" stroke-width="1"><path d="M1 1.200l4 4 4-4"/></svg>
<div class="a sb" style="left:899px;top:603px;width:30px;height:22px;"></div>
<svg class="a" style="left:905.1px;top:606.4px" width="16.500" height="14.500" viewBox="0 0 16.500 14.500"><path d="M4.600 1.400L7.400 0.400l2.600 1.300 5.900 1.100-.5 9.300-2.200 1.800-6-6z" fill="url(#fb)" stroke="#c4a552" stroke-width=".7" stroke-linejoin="round"/><path d="M0.500 4.900l7.500-1.100 3.500 1.500 1.800 8.500-9.700-2.300z" fill="url(#fg)" stroke="#b4923f" stroke-width=".7" stroke-linejoin="round"/></svg>
<div class="a f" style="left:698px;top:625px;width:201px;height:20px;background:#fff;"></div>
<div class="a" style="top:627px;line-height:16px;font-size:13px;left:700.30px;-webkit-text-stroke:0.080px;">1</div>
<div class="a dd" style="left:881px;top:626px;width:17px;height:18px;"></div>
<svg class="a" style="left:884.0px;top:633.0px" width="10" height="7" viewBox="0 0 10 7" fill="none" stroke="#4a4a4a" stroke-width="1"><path d="M1 1.200l4 4 4-4"/></svg>
<div class="a sb" style="left:899px;top:626px;width:30px;height:22px;"></div>
<svg class="a" style="left:905.1px;top:629.4px" width="16.500" height="14.500" viewBox="0 0 16.500 14.500"><path d="M4.600 1.400L7.400 0.400l2.600 1.300 5.900 1.100-.5 9.300-2.200 1.800-6-6z" fill="url(#fb)" stroke="#c4a552" stroke-width=".7" stroke-linejoin="round"/><path d="M0.500 4.900l7.500-1.100 3.500 1.500 1.800 8.500-9.700-2.300z" fill="url(#fg)" stroke="#b4923f" stroke-width=".7" stroke-linejoin="round"/></svg>
<div class="a " style="left:698px;top:674px;width:83px;height:20px;background:#fff"></div>
<div class="a dd" style="left:764px;top:675px;width:17px;height:18px;"></div>
<svg class="a" style="left:767.0px;top:682.0px" width="10" height="7" viewBox="0 0 10 7" fill="none" stroke="#4a4a4a" stroke-width="1"><path d="M1 1.200l4 4 4-4"/></svg>
<div class="a " style="left:0px;top:786.5px;width:1065px;height:17.5px;background:linear-gradient(#f6f6f6,#f0f0f0 50%,#e4e4e4 50%,#e8e8e8);border-bottom:1px solid #c6c6c6"></div>
<div class="a " style="left:0px;top:804px;width:1065px;height:19px;background:#f3f3f3"></div>
<div class="a" style="top:788px;line-height:16px;font-size:12px;letter-spacing:-0.320px;transform:scaleX(0.9637);transform-origin:left center;left:5.50px;-webkit-text-stroke:0;color:#3c3c3c;">Datensatz:</div>
<div class="a " style="left:94px;top:788px;width:72px;height:15px;background:#fff;border:1px solid #c8c8c8;border-bottom:none"></div>
<div class="a" style="top:788px;line-height:16px;font-size:12px;letter-spacing:-0.320px;transform:scaleX(0.9386);transform-origin:left center;left:97.00px;-webkit-text-stroke:0;">160 von 371</div>
<svg class="a" style="left:60px;top:789px" width="165" height="13" viewBox="60 789 165 13" fill="#3a3a3a"><path d="M65 791.500h1.500v8H65zM72 791.500v8l-4.500-4z"/><path d="M88 791.500v8l-4.500-4z"/><path d="M175 791.500v8l4.500-4z"/><path d="M191 791.500v8l4.500-4zM196.500 791.500h1.500v8h-1.500z"/><path d="M205 791.500v8l4.500-4z"/><path d="M213.500 792v7M210 795.500h7M211 793l5 5M216 793l-5 5" stroke="#eeb35c" stroke-width="1" fill="none"/><circle cx="213.500" cy="795.500" r="1.600" fill="#f3c374"/></svg>
<div class="a " style="left:223px;top:788px;width:1px;height:15px;background:#c4c4c4"></div>
<div class="a " style="left:310px;top:788px;width:1px;height:15px;background:#c4c4c4"></div>
<svg class="a" style="left:231px;top:789px" width="16" height="15" viewBox="0 0 16 15"><path d="M0.500 0.500h11.500l-4.600 5.600v5.400h-2.300v-5.400z" fill="#b5b5b5"/><path d="M8.300 8.200l6 5.800M14.300 8.200l-6 5.800" stroke="#a2a2a2" stroke-width="1.400" fill="none"/></svg>
<div class="a" style="top:788px;line-height:16px;font-size:12px;letter-spacing:-0.320px;transform:scaleX(0.9877);transform-origin:left center;left:250.80px;-webkit-text-stroke:0;color:#a3a3a3;">Kein Filter</div>
<div class="a " style="left:316px;top:788px;width:70px;height:15px;background:#fff;border:1px solid #c8c8c8;border-bottom:none"></div>
<div class="a" style="top:788px;line-height:16px;font-size:12px;letter-spacing:-0.320px;transform:scaleX(0.9334);transform-origin:left center;left:319.00px;-webkit-text-stroke:0;">Suchen</div>
<div class="a" style="top:806px;line-height:16px;font-size:12px;letter-spacing:-0.288px;left:8.50px;-webkit-text-stroke:0;">Lieferanten-Nummer beim Lieferanten</div>
<div class="a" style="top:806px;line-height:16px;font-size:12px;letter-spacing:-0.320px;transform:scaleX(0.9720);transform-origin:left center;left:827.00px;-webkit-text-stroke:0;">Num</div>
<div class="a" style="top:806px;line-height:16px;font-size:12px;letter-spacing:-0.228px;left:871.50px;-webkit-text-stroke:0;">Unterstützt von Microsoft Access</div>
<svg class="a" style="left:17px;top:102px" width="15" height="18" viewBox="0 0 15 18"><defs><linearGradient id="dg" x1="0" y1="0" x2="0" y2="1"><stop offset="0" stop-color="#050505"/><stop offset=".55" stop-color="#3a3a3a"/><stop offset="1" stop-color="#e8e8e8"/></linearGradient><linearGradient id="dp" x1="0" x2="1"><stop offset="0" stop-color="#c6dcef"/><stop offset="1" stop-color="#7d9fbf"/></linearGradient></defs><rect x="1.500" y="1.500" width="9" height="13" fill="#9c9c9c" stroke="#4e4e4e" stroke-width="1"/><rect x="4.600" y="3.200" width="4.700" height="10.600" fill="url(#dg)"/><path d="M1.700 2l2.800.6v14.300l-2.800-2.700z" fill="url(#dp)" stroke="#6d8aa6" stroke-width=".4"/><path d="M5.200 9.700l3-2.900v1.700c2.200.1 3.700-.5 4.700-1.900.4 2.500-.8 4.600-4.700 4.600v1.700z" fill="#3cb521" stroke="#23820f" stroke-width=".6"/><path d="M6.300 9.600l1.500-1.500v.9l2.300-.1-2.300 1.100v1z" fill="#9be57c"/></svg>
<svg class="a" style="left:60px;top:104px" width="20" height="14" viewBox="0 0 20 14"><rect x="3" y="1" width="2" height="11" fill="#000"/><path d="M14 1v11L7.200 6.500z" fill="#000"/></svg>
<svg class="a" style="left:104px;top:104px" width="14" height="14" viewBox="0 0 14 14"><path d="M10 1v11L3.200 6.500z" fill="#000"/></svg>
<svg class="a" style="left:145px;top:104px" width="14" height="14" viewBox="0 0 14 14"><path d="M3 1v11l6.800-5.500z" fill="#000"/></svg>
<svg class="a" style="left:185px;top:104px" width="18" height="14" viewBox="0 0 18 14"><path d="M3 1v11l6.800-5.500z" fill="#000"/><rect x="12" y="1" width="2" height="11" fill="#000"/></svg>
<svg class="a" style="left:225px;top:104px" width="20" height="14" viewBox="0 0 20 14"><path d="M3 1.800v9.400l5-4.700z" fill="#000"/><path d="M13.600 3.400v6.400M10.800 5l5.600 3.200M16.400 5l-5.600 3.200" stroke="#000" stroke-width="1.300" fill="none"/></svg>
<svg class="a" style="left:272px;top:104px" width="16" height="14" viewBox="0 0 16 14"><rect x="0" y="0" width="16" height="13.500" fill="#9fb2c4"/><rect x="0" y="0" width="16" height="1.500" fill="#8aa0b6"/><rect x="1.0" y="2.00" width="2.200" height="2.100" fill="#f4f8fb"/><rect x="4.0" y="2.00" width="2.200" height="2.100" fill="#f4f8fb"/><rect x="7.0" y="2.00" width="2.200" height="2.100" fill="#f4f8fb"/><rect x="10.0" y="2.00" width="2.200" height="2.100" fill="#f4f8fb"/><rect x="13.0" y="2.00" width="2.200" height="2.100" fill="#f4f8fb"/><rect x="1.0" y="4.90" width="2.200" height="2.100" fill="#f4f8fb"/><rect x="4.0" y="4.90" width="2.200" height="2.100" fill="#f4f8fb"/><rect x="7.0" y="4.90" width="2.200" height="2.100" fill="#f4f8fb"/><rect x="10.0" y="4.90" width="2.200" height="2.100" fill="#f4f8fb"/><rect x="13.0" y="4.90" width="2.200" height="2.100" fill="#f4f8fb"/><rect x="1.0" y="7.80" width="2.200" height="2.100" fill="#f4f8fb"/><rect x="4.0" y="7.80" width="2.200" height="2.100" fill="#f4f8fb"/><rect x="7.0" y="7.80" width="2.200" height="2.100" fill="#f4f8fb"/><rect x="10.0" y="7.80" width="2.200" height="2.100" fill="#f4f8fb"/><rect x="13.0" y="7.80" width="2.200" height="2.100" fill="#f4f8fb"/><rect x="1.0" y="10.70" width="2.200" height="2.100" fill="#f4f8fb"/><rect x="4.0" y="10.70" width="2.200" height="2.100" fill="#f4f8fb"/><rect x="7.0" y="10.70" width="2.200" height="2.100" fill="#f4f8fb"/><rect x="10.0" y="10.70" width="2.200" height="2.100" fill="#f4f8fb"/><rect x="13.0" y="10.70" width="2.200" height="2.100" fill="#f4f8fb"/></svg>
<svg width="0" height="0" style="position:absolute"><defs><linearGradient id="lg" x1="0" y1="0" x2="0" y2="1"><stop offset="0" stop-color="#174f86"/><stop offset=".5" stop-color="#2f86c8"/><stop offset="1" stop-color="#7fd0f2"/></linearGradient></defs></svg>
<svg class="a" style="left:318px;top:103.8px" width="16.0" height="13.2" viewBox="0 0 16 13.200"><path d="M5.600 1.200C6 .2 10 .2 10.400 1.200L11 8H5z" fill="#6f6b63"/><path d="M6.800 2.600h2.400l-.3 3.600H7.100z" fill="#b5b0a6"/><path d="M1.800 1.900c1-.9 3.600-.9 4.400 0L7.700 9.400H.2z" fill="#4d4942"/><path d="M14.200 1.900c-1-.9-3.600-.9-4.400 0L8.300 9.400h7.500z" fill="#4d4942"/><path d="M2.800 2.600l2.200-.1.500 3.800-3.600.3z" fill="#aaa499"/><path d="M13.200 2.600l-2.200-.1-.5 3.800 3.600.3z" fill="#8e887e"/><circle cx="4" cy="9.400" r="3.600" fill="#3a3731"/><circle cx="12" cy="9.400" r="3.600" fill="#3a3731"/><circle cx="4" cy="9.600" r="2.100" fill="url(#lg)"/><circle cx="12" cy="9.600" r="2.100" fill="url(#lg)"/></svg>
<svg class="a" style="left:363.8px;top:99.9px" width="13.3" height="11.0" viewBox="0 0 16 13.200"><path d="M5.600 1.200C6 .2 10 .2 10.400 1.200L11 8H5z" fill="#6f6b63"/><path d="M6.800 2.600h2.400l-.3 3.600H7.100z" fill="#b5b0a6"/><path d="M1.800 1.900c1-.9 3.600-.9 4.400 0L7.700 9.400H.2z" fill="#4d4942"/><path d="M14.200 1.900c-1-.9-3.600-.9-4.400 0L8.300 9.400h7.500z" fill="#4d4942"/><path d="M2.800 2.600l2.200-.1.500 3.800-3.600.3z" fill="#aaa499"/><path d="M13.200 2.600l-2.200-.1-.5 3.800 3.600.3z" fill="#8e887e"/><circle cx="4" cy="9.400" r="3.600" fill="#3a3731"/><circle cx="12" cy="9.400" r="3.600" fill="#3a3731"/><circle cx="4" cy="9.600" r="2.100" fill="url(#lg)"/><circle cx="12" cy="9.600" r="2.100" fill="url(#lg)"/></svg>
<svg class="a" style="left:413.6px;top:99.9px" width="13.3" height="11.0" viewBox="0 0 16 13.200"><path d="M5.600 1.200C6 .2 10 .2 10.400 1.200L11 8H5z" fill="#6f6b63"/><path d="M6.800 2.600h2.400l-.3 3.600H7.100z" fill="#b5b0a6"/><path d="M1.800 1.900c1-.9 3.600-.9 4.400 0L7.700 9.400H.2z" fill="#4d4942"/><path d="M14.200 1.900c-1-.9-3.600-.9-4.400 0L8.300 9.400h7.500z" fill="#4d4942"/><path d="M2.800 2.600l2.200-.1.500 3.800-3.600.3z" fill="#aaa499"/><path d="M13.200 2.600l-2.200-.1-.5 3.800 3.600.3z" fill="#8e887e"/><circle cx="4" cy="9.400" r="3.600" fill="#3a3731"/><circle cx="12" cy="9.400" r="3.600" fill="#3a3731"/><circle cx="4" cy="9.600" r="2.100" fill="url(#lg)"/><circle cx="12" cy="9.600" r="2.100" fill="url(#lg)"/></svg>
<div class="a" style="top:108px;line-height:16px;font-size:10.2px;letter-spacing:-0.320px;transform:scaleX(0.9398);transform-origin:left center;left:357.90px;">Objekt</div>
<div class="a" style="top:108px;line-height:16px;font-size:10.2px;letter-spacing:-0.320px;transform:scaleX(0.8753);transform-origin:left center;left:406.90px;">Anlage</div>
<svg class="a" style="left:462px;top:102.5px" width="15" height="17" viewBox="0 0 15 17"><path d="M0.500 0.500h7.500l4 4v11.500h-11.500z" fill="#f4f5f6" stroke="#8d9299" stroke-width=".9"/><path d="M8 0.500v4h4" fill="#dfe2e6" stroke="#8d9299" stroke-width=".7"/><path d="M2.500 7h2M2.500 9.500h1.500M2.500 12h2" stroke="#b9bec4" stroke-width=".8"/><path d="M9.600 12.400l3.800 3.600" stroke="#d9952b" stroke-width="2" stroke-linecap="round"/><circle cx="7.200" cy="10" r="3.200" fill="#e4f0fa" stroke="#4f5a66" stroke-width="1.100"/></svg>
<svg class="a" style="left:529px;top:102.5px" width="15" height="17" viewBox="0 0 15 17"><path d="M5 0.500h5.500l3.500 3.500v8.500h-9z" fill="#eceeef" stroke="#8f9398" stroke-width=".9"/><path d="M10.500 0.500v3.500h3.500" fill="none" stroke="#8f9398" stroke-width=".7"/><path d="M0.500 4.500h5.500l3 3v8.500h-8.500z" fill="#f3f4f5" stroke="#8f9398" stroke-width=".9"/><path d="M2.500 9h4.500M2.500 11h4.500M2.500 13h3.500" stroke="#b4b8bd" stroke-width=".8"/></svg>
<svg class="a" style="left:582px;top:102.5px" width="17" height="18" viewBox="0 0 17 18"><defs><linearGradient id="flg" x1="0" y1="0" x2="1" y2="0"><stop offset="0" stop-color="#dfe6ee"/><stop offset=".35" stop-color="#ffffff"/><stop offset="1" stop-color="#a9b8cf"/></linearGradient></defs><path d="M1.700 2.300C2.100 .7 5.400 .6 8.500 2.400c3 1.800 6 4.600 6.500 6.200l-6 .9-3.600 2-2 4.300c-.5.900-2 .5-1.800-.4L4.100 10c.3-3-1.200-4.500-2.400-7.700z" fill="url(#flg)" stroke="#31415d" stroke-width="1"/><path d="M5.800 2.800c3 .9 6.600 3.400 8.700 5.700l-5.300.8z" fill="#6f86b4"/><path d="M7 4.200l6.300 4.200M8.300 3.600l-.6 5.200M10.400 4.900l-.7 4.100" stroke="#dfe6f2" stroke-width=".5" fill="none"/><path d="M7.600 8.300l8 8M15.600 8.300l-8 8" stroke="#e01f26" stroke-width="2.100"/></svg>
<div class="a" style="top:103px;line-height:16px;font-size:13px;letter-spacing:-0.320px;left:627.30px;color:#23237c;">Beleg-Listen</div>
<div class="a " style="left:627.5px;top:116.6px;width:8.0px;height:1.0px;background:#23237c"></div>
<svg class="a" style="left:729.5px;top:102.5px" width="18" height="17" viewBox="0 0 18 17"><rect x="10.800" y="1.300" width="5.400" height="11.400" rx="2.700" fill="none" stroke="#6a7178" stroke-width="2.500"/><rect x="10.800" y="1.300" width="5.400" height="11.400" rx="2.700" fill="none" stroke="#cfd4d9" stroke-width=".9"/><path d="M3 15.200c-1.700-.2-2.400-1.900-1-2.900l7.400-3.400c1.300-.5 2.900.1 3.300 1.200.4 1-.3 1.900-1.300 2.400l-5 2.200c-1 .4-2.300.6-3.400.5z" fill="none" stroke="#6a7178" stroke-width="2.300"/><path d="M3 15.200c-1.700-.2-2.400-1.900-1-2.900l7.400-3.400c1.300-.5 2.900.1 3.300 1.200.4 1-.3 1.900-1.300 2.400l-5 2.200c-1 .4-2.300.6-3.400.5z" fill="none" stroke="#cfd4d9" stroke-width=".8"/></svg>
<svg class="a" style="left:776.5px;top:102.6px" width="13" height="16.5" viewBox="0 0 13 16.5"><rect x="0.800" y="1.800" width="11.600" height="14" rx="1.200" fill="#edd3a0" stroke="#b58a45" stroke-width=".8"/><rect x="1.900" y="2.900" width="9.400" height="11.600" fill="#fcfcfa"/><rect x="3.800" y="0.400" width="5.600" height="2.600" rx="1" fill="#d6dade" stroke="#8a9096" stroke-width=".7"/><path d="M3.300 8.800l2.200 2.400 4.200-5.200" fill="none" stroke="#35a526" stroke-width="1.900"/></svg>
<svg width="0" height="0" style="position:absolute"><defs><linearGradient id="sg" x1="0" y1="0" x2="1" y2=".6"><stop offset="0" stop-color="#6db3ea"/><stop offset=".5" stop-color="#2a7ccb"/><stop offset="1" stop-color="#135095"/></linearGradient></defs></svg>
<svg class="a" style="left:824.2px;top:102.6px" width="18" height="17" viewBox="0 0 18 17"><path d="M2.900 0.500h4.900v9.900h3L5.350 16.400 0 10.400h2.900z" fill="url(#sg)" stroke="#17549a" stroke-width=".4"/><text x="10.300" y="6" font-family="Liberation Sans" font-size="7.800" font-weight="bold" font-style="italic" fill="#4b5664">A</text><text x="10.100" y="13.200" font-family="Liberation Sans" font-size="7.800" font-weight="bold" font-style="italic" fill="#4b5664">Z</text></svg>
<svg class="a" style="left:866px;top:102.6px" width="18" height="17" viewBox="0 0 18 17"><path d="M2.900 0.500h4.900v9.900h3L5.350 16.400 0 10.400h2.900z" fill="url(#sg)" stroke="#17549a" stroke-width=".4"/><text x="10.300" y="6" font-family="Liberation Sans" font-size="7.800" font-weight="bold" font-style="italic" fill="#4b5664">Z</text><text x="10.100" y="13.200" font-family="Liberation Sans" font-size="7.800" font-weight="bold" font-style="italic" fill="#4b5664">A</text></svg>
<svg class="a" style="left:955.5px;top:102.5px" width="17" height="17" viewBox="0 0 17 17"><defs><linearGradient id="hr" x1="0" y1="0" x2="0" y2="1"><stop offset="0" stop-color="#9aa7b2"/><stop offset=".6" stop-color="#7e8893"/><stop offset="1" stop-color="#3a343f"/></linearGradient><radialGradient id="hg" cx=".5" cy=".3" r=".75"><stop offset="0" stop-color="#86d560"/><stop offset=".6" stop-color="#4cba2a"/><stop offset="1" stop-color="#37a41a"/></radialGradient></defs><circle cx="8.550" cy="8.300" r="8" fill="url(#hr)"/><circle cx="8.550" cy="8.300" r="6.600" fill="url(#hg)"/><text x="8.600" y="12.600" text-anchor="middle" font-family="Liberation Sans" font-size="11.500" font-weight="bold" fill="#fff">?</text></svg>
</body>
</html>
